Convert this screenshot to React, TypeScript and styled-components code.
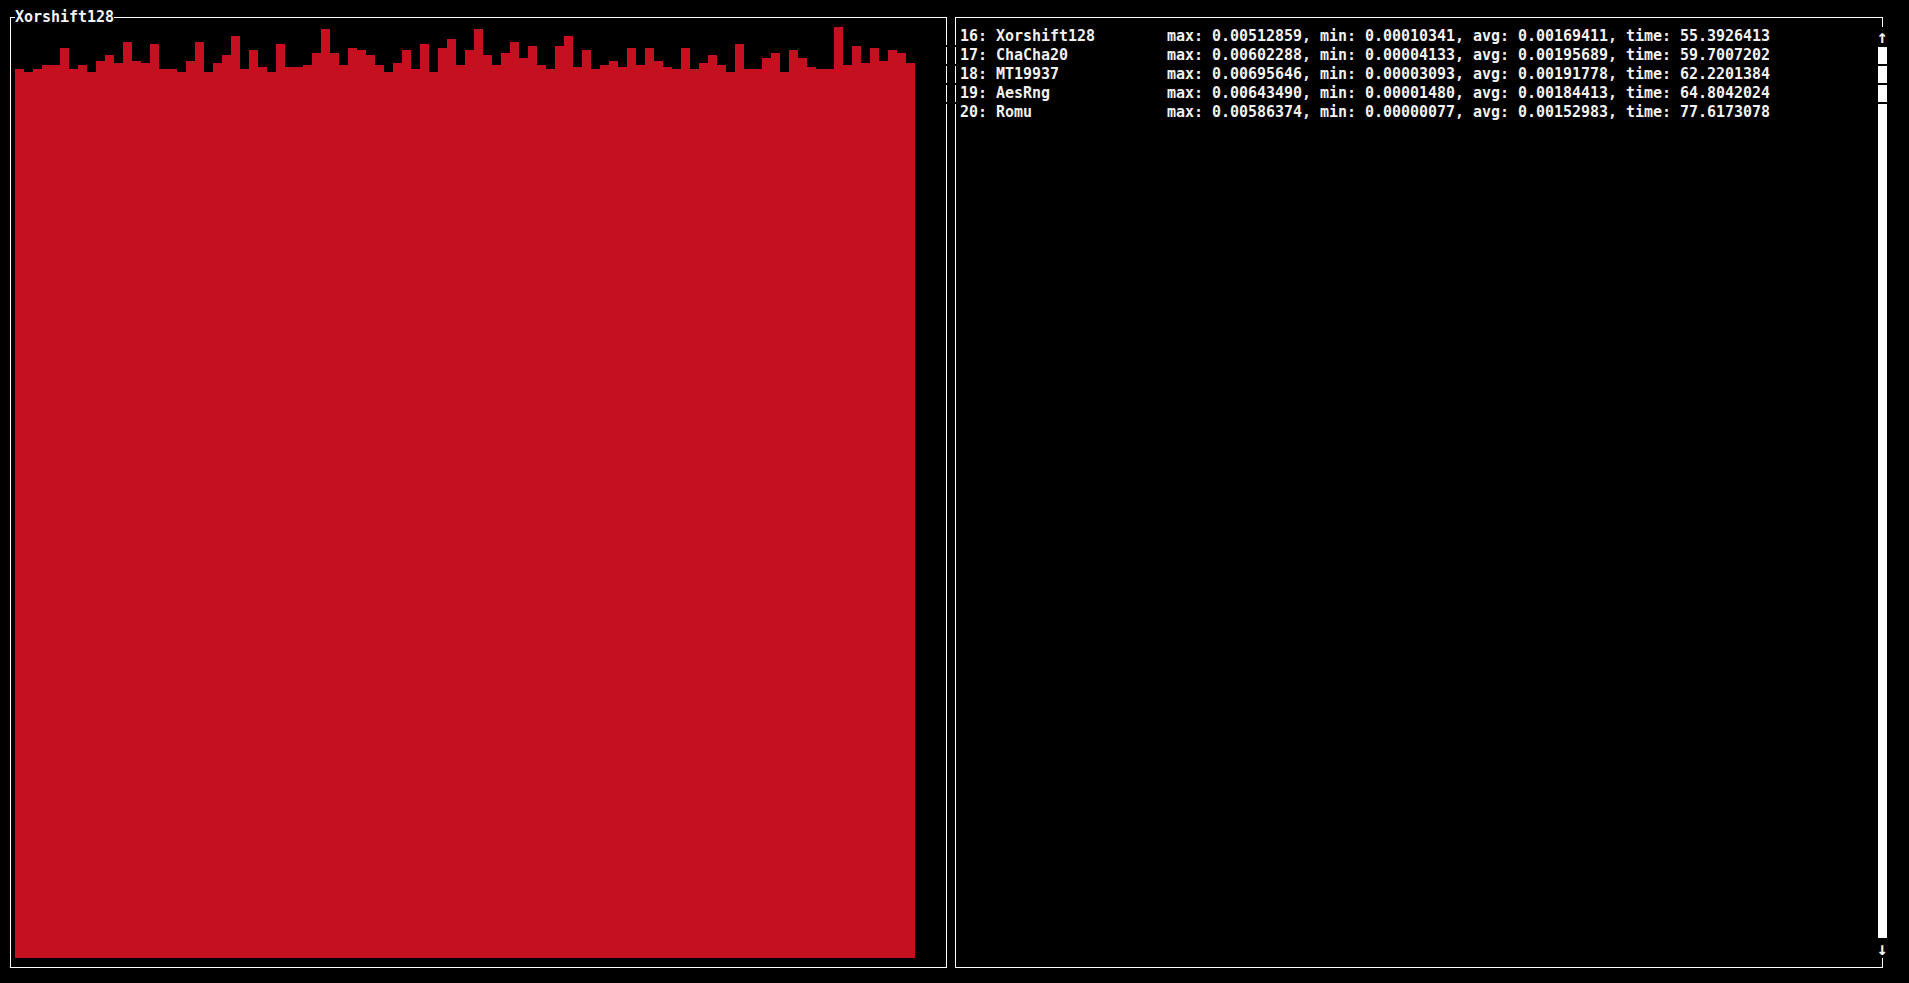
import React from "react";
import styled, { createGlobalStyle } from "styled-components";

const CW = 9;
const CH = 19;
const ROWS = 51;

const GlobalStyle = createGlobalStyle`
  html, body { margin: 0; padding: 0; background: #000; }
  body { font-family: "DejaVu Sans Mono", "Liberation Mono", monospace; }
`;

const Screen = styled.div`
  width: 1909px;
  height: 983px;
  box-sizing: border-box;
  padding: 8px 0 0 6px;
  display: flex;
  background: #000;
  overflow: hidden;
`;

const Panel = styled.section<{ $cols: number }>`
  position: relative;
  width: ${(p) => p.$cols * CW}px;
  height: ${ROWS * CH}px;
  padding: 9px 4px;
  box-sizing: border-box;
  display: flex;
  flex-shrink: 0;
`;

const Frame = styled.div`
  flex: 1;
  border: 1px solid #fff;
  padding: 9px 4px;
  display: flex;
  flex-direction: column;
  min-width: 0;
`;

const Title = styled.div`
  position: absolute;
  top: 0;
  left: 9px;
  height: ${CH}px;
  line-height: ${CH}px;
  background: #000;
  color: #f4f4f4;
  font-size: 15px;
  font-weight: bold;
  letter-spacing: -0.03px;
  white-space: pre;
`;

const Chart = styled.div`
  flex: 1;
  display: flex;
  align-items: flex-end;
  padding-bottom: 1px;
`;

const Bar = styled.div`
  width: ${CW}px;
  flex-shrink: 0;
  background: #c5111f;
`;

const Line = styled.div`
  height: ${CH}px;
  line-height: ${CH}px;
  color: #f2f2f2;
  font-size: 15px;
  font-weight: bold;
  letter-spacing: -0.03px;
  white-space: pre;
`;

const Gap = styled.div<{ $top: number; $left: number }>`
  position: absolute;
  top: ${(p) => p.$top}px;
  left: ${(p) => p.$left}px;
  width: 2px;
  height: 2px;
  background: #000;
`;

const Scrollbar = styled.div`
  position: absolute;
  top: ${CH}px;
  right: 0;
  width: ${CW}px;
  height: ${(ROWS - 2) * CH}px;
  display: flex;
  flex-direction: column;
  background: #000;
`;

const Arrow = styled.div`
  height: ${CH}px;
  line-height: ${CH}px;
  display: flex;
  align-items: center;
  justify-content: center;
  overflow: visible;
  color: #f2f2f2;
  font-family: "DejaVu Sans Mono", monospace;
  font-size: 18px;
  font-weight: bold;
`;

const Track = styled.div`
  flex: 1;
  display: flex;
  flex-direction: column;
  gap: 2px;
  padding: 1px 0;
`;

const Thumb = styled.div<{ $grow?: boolean }>`
  background: #fff;
  height: ${(p) => (p.$grow ? "auto" : "17px")};
  flex: ${(p) => (p.$grow ? 1 : "none")};
`;

const tops = [
  68, 70.7, 68, 64, 64, 47, 68, 64, 70.7, 60, 54, 62, 41, 60, 62, 43, 68, 68, 70.7, 60,
  41, 70.7, 62, 54, 35, 68, 49, 66, 70.7, 43, 66, 66, 64, 52, 28, 52, 64, 47, 49, 54,
  64, 70.7, 62, 49, 68, 43, 70.7, 47, 38, 64, 49, 28, 54, 64, 52, 41, 57, 45, 64, 68,
  45, 35, 66, 49, 68, 64, 60, 66, 47, 64, 47, 60, 66, 68, 47, 68, 62, 54, 64, 70.7,
  43, 68, 68, 57, 52, 70.7, 49, 57, 66, 68, 68, 26, 64, 45, 62, 47, 60, 49, 52, 62,
];

const rows = [
  ["16", "Xorshift128", "0.00512859", "0.00010341", "0.00169411", "55.3926413"],
  ["17", "ChaCha20", "0.00602288", "0.00004133", "0.00195689", "59.7007202"],
  ["18", "MT19937", "0.00695646", "0.00003093", "0.00191778", "62.2201384"],
  ["19", "AesRng", "0.00643490", "0.00001480", "0.00184413", "64.8042024"],
  ["20", "Romu", "0.00586374", "0.00000077", "0.00152983", "77.6173078"],
];

const gapTops = [37, 56, 75, 94];

export default function App() {
  return (
    <>
      <GlobalStyle />
      <Screen>
        <Panel $cols={105}>
          <Frame>
            <Chart>
              {tops.map((t, i) => (
                <Bar key={i} style={{ height: `${957 - t}px` }} />
              ))}
            </Chart>
          </Frame>
          <Title>Xorshift128</Title>
          {gapTops.map((t) => (
            <Gap key={t} $top={t} $left={939} />
          ))}
        </Panel>
        <Panel $cols={104}>
          <Frame>
            {rows.map(([n, name, max, min, avg, time]) => (
              <Line key={n}>
                {`${n}: ${name.padEnd(19, " ")}max: ${max}, min: ${min}, avg: ${avg}, time: ${time}`}
              </Line>
            ))}
          </Frame>
          {gapTops.map((t) => (
            <Gap key={t} $top={t} $left={3} />
          ))}
          <Scrollbar>
            <Arrow>↑</Arrow>
            <Track>
              <Thumb />
              <Thumb />
              <Thumb />
              <Thumb $grow />
            </Track>
            <Arrow>↓</Arrow>
          </Scrollbar>
        </Panel>
      </Screen>
    </>
  );
}
